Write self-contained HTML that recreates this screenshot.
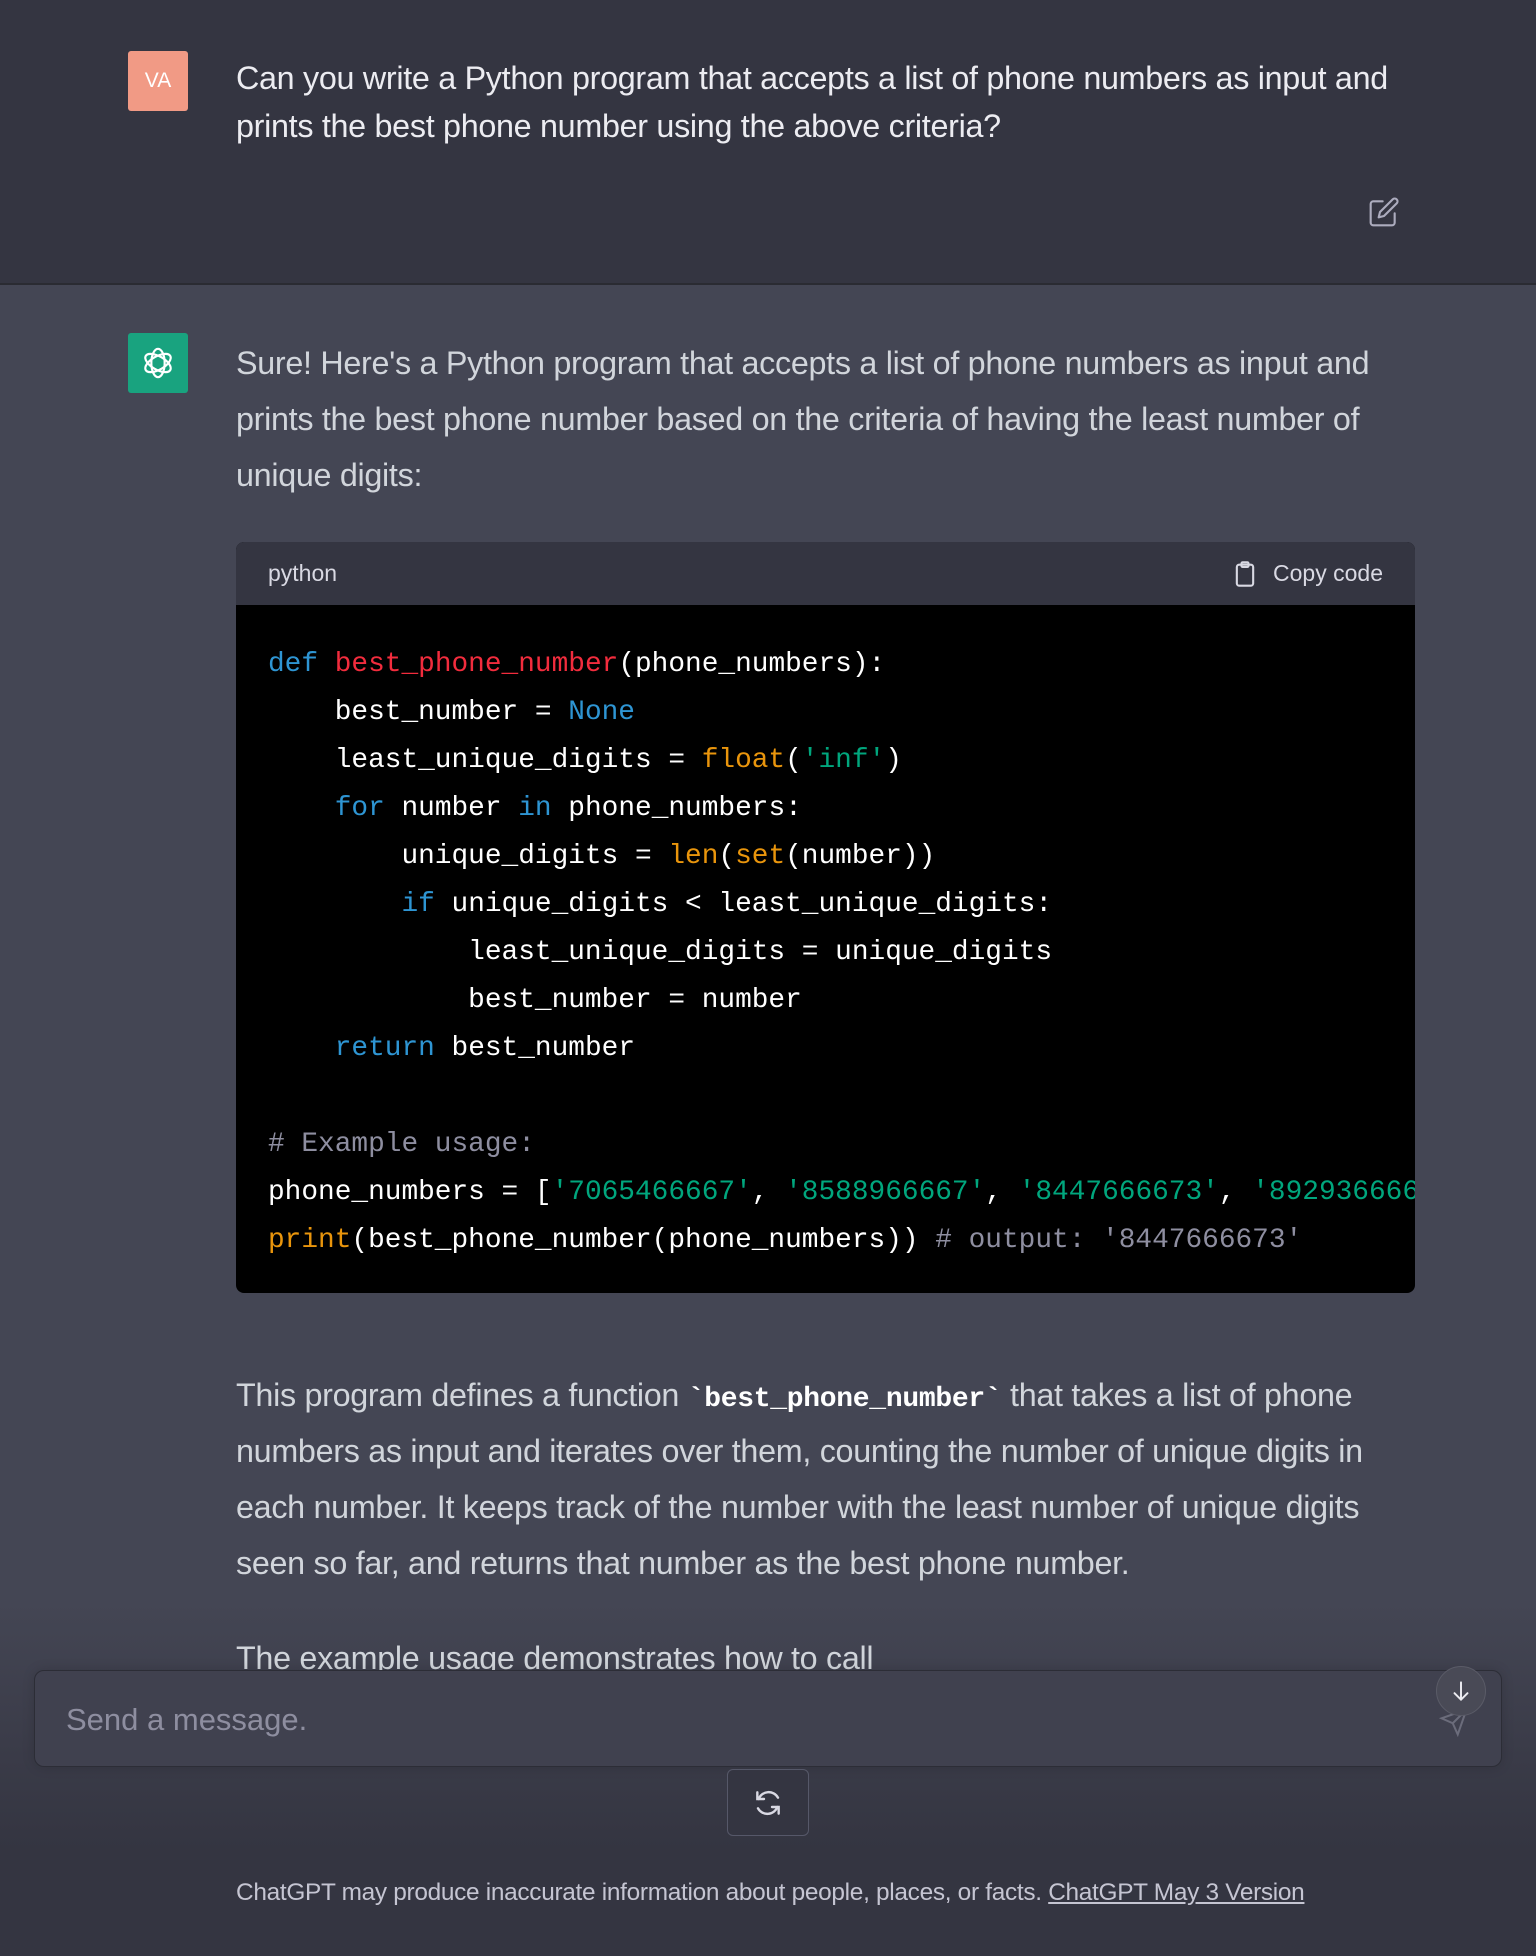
<!DOCTYPE html>
<html><head><meta charset="utf-8">
<style>
*{margin:0;padding:0;box-sizing:border-box}
html,body{width:1536px;height:1956px;overflow:hidden;background:#444654;font-family:"Liberation Sans",sans-serif;color:#ececf1}
.user{position:absolute;left:0;top:0;width:1536px;height:285px;background:#343541;border-bottom:2px solid #2a2b32}
.av{position:absolute;width:60px;height:60px;border-radius:3px;color:#fff;font-size:22px;display:flex;align-items:center;justify-content:center}
.txt{position:absolute;left:236px;font-size:32.3px;white-space:nowrap;color:#ececf1;letter-spacing:-0.3px}
.asst{color:#d1d5db}
.code{position:absolute;left:236px;top:542px;width:1179px;height:751px;background:#000;border-radius:8px;overflow:hidden}
.ch{height:63px;background:#343541;display:flex;align-items:center;justify-content:space-between;padding:0 32px;font-size:23px;color:#d9d9e3}
pre{font-family:"Liberation Mono",monospace;font-size:27.8px;line-height:48px;color:#fff;padding:36px 0 0 32px;white-space:pre}
.k{color:#2e95d3}.f{color:#f22c3d}.o{color:#e9950c}.s{color:#00a67d}.c{color:#8e8ea0}
b.m{font-family:"Liberation Mono",monospace;font-size:28px;color:#fff;line-height:1;vertical-align:baseline}
.fade{position:absolute;left:0;top:1600px;width:1536px;height:356px;background:linear-gradient(#444654 0%,#3b3c49 40%,#343541 70%)}
.inp{position:absolute;left:34px;top:1670px;width:1468px;height:97px;background:#40414f;border:1px solid #2c2d36;border-radius:10px;box-shadow:0 0 12px rgba(0,0,0,.15)}
</style></head><body>
<div class="user">
 <div class="av" style="left:128px;top:51px;background:#f19a85;font-size:21px">VA</div>
 <div class="txt" style="top:54px;line-height:48px">Can you write a Python program that accepts a list of phone numbers as input and<br>prints the best phone number using the above criteria?</div>
 <svg style="position:absolute;left:1368px;top:196px" width="32" height="32" viewBox="0 0 24 24" fill="none" stroke="#acacbe" stroke-width="1.6" stroke-linecap="round" stroke-linejoin="round"><path d="M11 4H4a2 2 0 0 0-2 2v14a2 2 0 0 0 2 2h14a2 2 0 0 0 2-2v-7"/><path d="M18.5 2.5a2.1 2.1 0 0 1 3 3L12 15l-4 1 1-4 9.5-9.5z"/></svg>
</div>
<div class="av" style="left:128px;top:333px;background:#19a37f">
<svg width="40" height="40" viewBox="0 0 24 24" fill="none" stroke="#fff" stroke-width="1.3"><g transform="translate(12 12)"><ellipse rx="4" ry="8.5" transform="rotate(0)"/><ellipse rx="4" ry="8.5" transform="rotate(60)"/><ellipse rx="4" ry="8.5" transform="rotate(120)"/></g></svg></div>
<div class="txt asst" style="top:335px;line-height:56px">Sure! Here's a Python program that accepts a list of phone numbers as input and<br>prints the best phone number based on the criteria of having the least number of<br>unique digits:</div>
<div class="code">
 <div class="ch"><span>python</span><span style="display:flex;align-items:center;gap:14px"><svg width="28" height="30" viewBox="0 0 24 24" fill="none" stroke="#d9d9e3" stroke-width="1.8"><rect x="5" y="4" width="14" height="18" rx="2"/><rect x="9" y="2" width="6" height="4" rx="1"/></svg>Copy code</span></div>
<pre><span class="k">def</span> <span class="f">best_phone_number</span>(phone_numbers):
    best_number = <span class="k">None</span>
    least_unique_digits = <span class="o">float</span>(<span class="s">'inf'</span>)
    <span class="k">for</span> number <span class="k">in</span> phone_numbers:
        unique_digits = <span class="o">len</span>(<span class="o">set</span>(number))
        <span class="k">if</span> unique_digits &lt; least_unique_digits:
            least_unique_digits = unique_digits
            best_number = number
    <span class="k">return</span> best_number

<span class="c"># Example usage:</span>
phone_numbers = [<span class="s">'7065466667'</span>, <span class="s">'8588966667'</span>, <span class="s">'8447666673'</span>, <span class="s">'8929366666'</span>]
<span class="o">print</span>(best_phone_number(phone_numbers)) <span class="c"># output: '8447666673'</span></pre>
</div>
<div class="txt asst" style="top:1367px;line-height:56px">This program defines a function <b class="m">`best_phone_number`</b> that takes a list of phone<br>numbers as input and iterates over them, counting the number of unique digits in<br>each number. It keeps track of the number with the least number of unique digits<br>seen so far, and returns that number as the best phone number.</div>
<div class="fade"></div>
<div class="txt asst" style="top:1630px;line-height:56px;height:40px;overflow:hidden">The example usage demonstrates how to call</div>
<div class="inp"><div style="position:absolute;left:31px;top:31px;font-size:31px;color:#8e8ea0">Send a message.</div>
<svg style="position:absolute;left:1404px;top:36px" width="30" height="30" viewBox="0 0 24 24" fill="none" stroke="#6b6c7b" stroke-width="1.6"><path d="M22 2 11 13M22 2l-7 20-4-9-9-4 20-7z"/></svg></div>
<div style="position:absolute;left:1436px;top:1666px;width:50px;height:50px;border-radius:50%;background:#494a56;border:1px solid #5a5b67;display:flex;align-items:center;justify-content:center"><svg width="26" height="26" viewBox="0 0 24 24" fill="none" stroke="#ececf1" stroke-width="1.8" stroke-linecap="round"><path d="M12 4v16M6 14l6 6 6-6"/></svg></div>
<div style="position:absolute;left:727px;top:1769px;width:82px;height:67px;border:1px solid #565869;border-radius:6px;background:#343541;display:flex;align-items:center;justify-content:center"><svg width="32" height="32" viewBox="0 0 24 24" fill="none" stroke="#d9d9e3" stroke-width="1.8" stroke-linecap="round"><path d="M4 4v5h5"/><path d="M20 20v-5h-5"/><path d="M5 9a8 8 0 0 1 14.5-1"/><path d="M19 15a8 8 0 0 1-14.5 1"/></svg></div>
<div style="position:absolute;left:236px;top:1879px;font-size:24.4px;color:#c5c5d2;white-space:nowrap;letter-spacing:-0.3px">ChatGPT may produce inaccurate information about people, places, or facts. <u>ChatGPT May 3 Version</u></div>
</body></html>
